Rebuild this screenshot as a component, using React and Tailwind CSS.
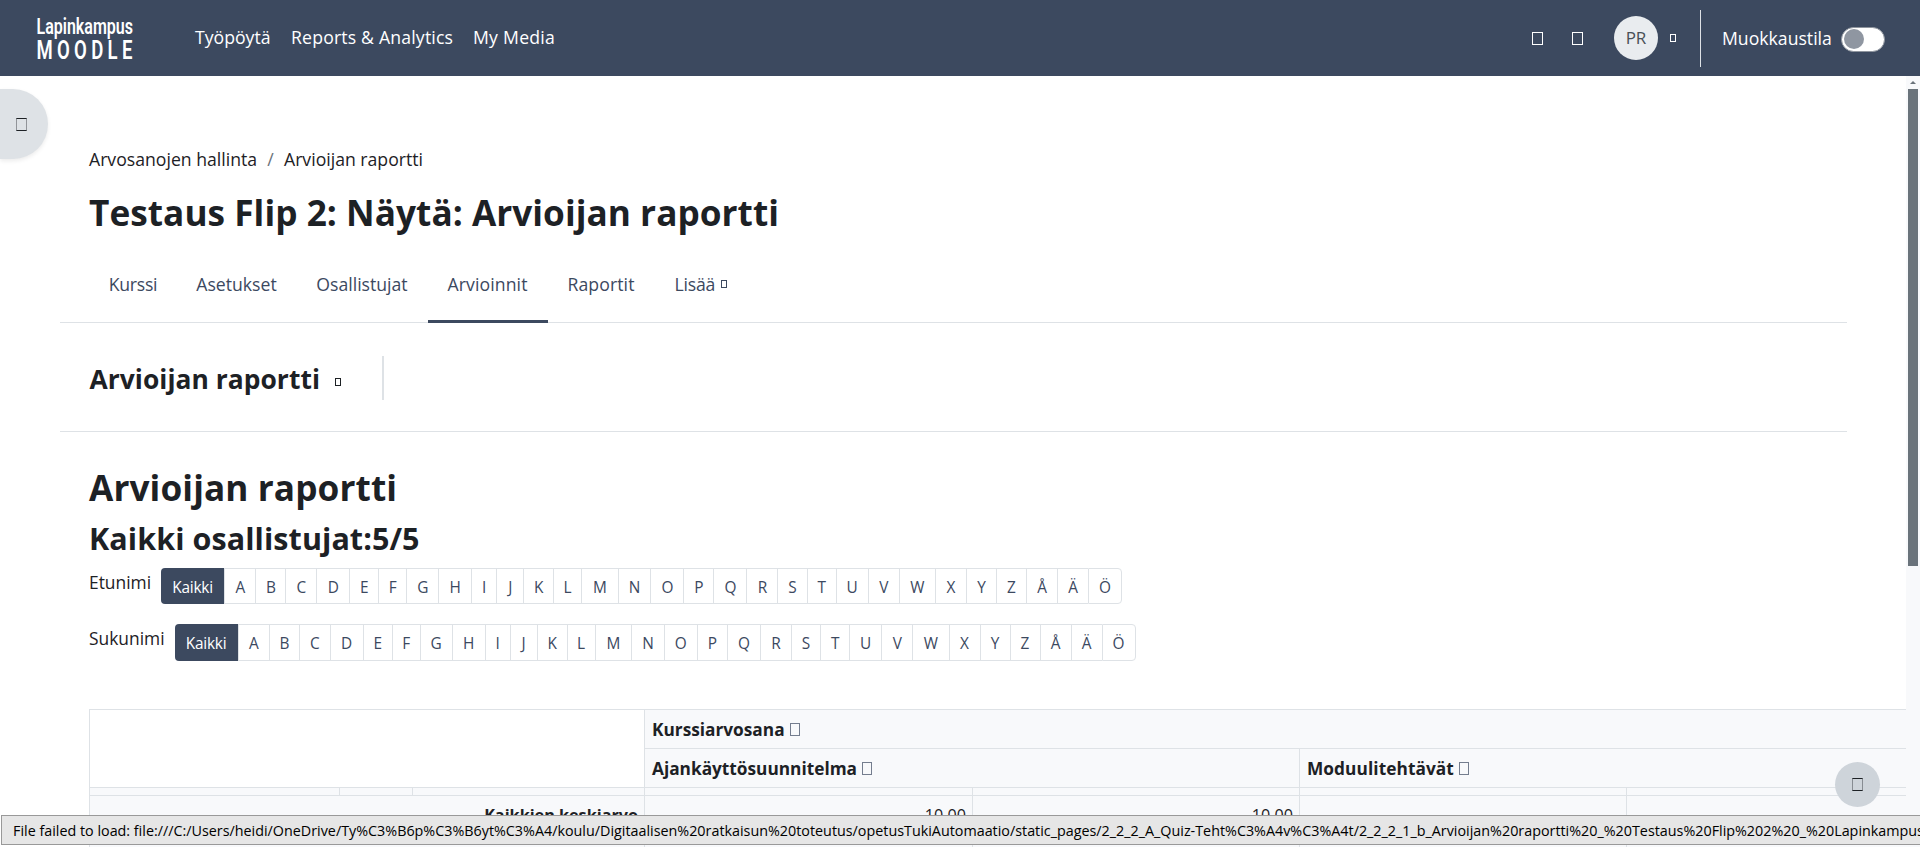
import React from "react";

const LETTERS = [
  ["A", "w-[31.4px]"], ["B", "w-[29.8px]"], ["C", "w-[31px]"], ["D", "w-[32.9px]"], ["E", "w-[29.1px]"],
  ["F", "w-[27.9px]"], ["G", "w-[32.2px]"], ["H", "w-[32.9px]"], ["I", "w-[24.9px]"], ["J", "w-[27.2px]"],
  ["K", "w-[29.8px]"], ["L", "w-[28.1px]"], ["M", "w-[36.4px]"], ["N", "w-[32.9px]"], ["O", "w-[32.8px]"],
  ["P", "w-[30.2px]"], ["Q", "w-[33px]"], ["R", "w-[31px]"], ["S", "w-[29.1px]"], ["T", "w-[29.2px]"],
  ["U", "w-[32px]"], ["V", "w-[31.1px]"], ["W", "w-[36.2px]"], ["X", "w-[31px]"], ["Y", "w-[30px]"],
  ["Z", "w-[30px]"], ["Å", "w-[31px]"], ["Ä", "w-[31px]"], ["Ö", "w-[34.2px]"],
];

const TABS = [
  ["Kurssi", "w-[87px] tracking-[-0.3px]"],
  ["Asetukset", "w-[120px]"],
  ["Osallistujat", "w-[131px]"],
  ["Arvioinnit", "w-[120px] tracking-[0.1px]", true],
  ["Raportit", "w-[107px] tracking-[0.1px]"],
];

function Glyph({ className }) {
  return <span className={`inline-block shrink-0 border ${className}`} />;
}

function Initials({ label, className, textOffset }) {
  return (
    <div className="flex items-start">
      <span className="mr-2.5 h-7 text-[17.4px] leading-7">{label}</span>
      <div className={`flex text-[15.4px] text-[#3c495f] ${className}`}>
        <span className={`flex w-[63px] items-center justify-center rounded-l bg-[#3c495f] tracking-[-0.2px] text-white ${textOffset}`}>
          Kaikki
        </span>
        {LETTERS.map(([letter, width]) => (
          <span
            key={letter}
            className={`flex items-center justify-center border-y border-l border-[#dee2e6] last:rounded-r last:border-r ${textOffset} ${width}`}
          >
            {letter}
          </span>
        ))}
      </div>
    </div>
  );
}

const TH = "border-t border-l border-[#dee2e6] bg-[#f8f9fb] px-[7px] pt-px pb-0 text-left font-bold whitespace-nowrap";
const TD = "border-t border-l border-[#dee2e6] bg-[#f8f9fb] px-1.5 py-0 text-right align-top whitespace-nowrap";

function Navbar() {
  return (
    <header className="flex h-[76px] shrink-0 items-center bg-[#3c495f] text-[17.65px] text-white">
      <svg className="ml-[36px] h-[50px] w-[100px]" viewBox="0 0 100 50" fill="#fff" fontFamily="Roboto, sans-serif" fontWeight="600">
        <text transform="translate(0.5 21) scale(0.76 1)" fontSize="22" textLength="127" lengthAdjust="spacingAndGlyphs">Lapinkampus</text>
        <text transform="translate(0.5 45.5) scale(0.7 1)" fontSize="26.5" textLength="137" lengthAdjust="spacing">MOODLE</text>
      </svg>
      <nav className="ml-[59px] flex gap-5 pb-[2px]">
        <span className="w-[76px] whitespace-nowrap">Työpöytä</span>
        <span className="w-[162px] tracking-[0.18px] whitespace-nowrap">Reports &amp; Analytics</span>
        <span className="tracking-[0.25px] whitespace-nowrap">My Media</span>
      </nav>
      <div className="ml-auto flex h-full items-center pr-[35px]">
        <Glyph className="h-[13px] w-[11px]" />
        <Glyph className="ml-[29px] h-[13px] w-[11px]" />
        <span className="ml-[31px] flex size-11 items-center justify-center rounded-full bg-[#e9ecef] text-[17px] text-[#495057]">PR</span>
        <Glyph className="ml-3 h-2 w-[6px]" />
        <span className="mr-[21px] ml-[24px] h-[57px] w-px bg-[#dee2e6]" />
        <span className="w-[110px] whitespace-nowrap">Muokkaustila</span>
        <span className="mt-[2px] ml-[9px] flex h-[25px] w-11 items-center rounded-full border border-[#8f959e] bg-white px-[2px]">
          <span className="size-5 rounded-full bg-[#8f96a1]" />
        </span>
      </div>
    </header>
  );
}

function GradeTable() {
  return (
    <table className="mt-12 w-[1864px] table-fixed border-separate border-spacing-0 text-[17.25px] leading-[37px]">
      <colgroup>
        <col className="w-[250px]" />
        <col className="w-[73px]" />
        <col className="w-[232px]" />
        <col className="w-[328px]" />
        <col className="w-[327px]" />
        <col className="w-[327px]" />
        <col className="w-[327px]" />
      </colgroup>
      <tbody>
        <tr className="h-[39px]">
          <td colSpan={3} rowSpan={2} className="border-t border-l border-[#dee2e6]" />
          <th colSpan={4} className={TH}>
            Kurssiarvosana
            <Glyph className="ml-[5px] h-[13px] w-[10px] border-[#3c495f]/70" />
          </th>
        </tr>
        <tr className="h-[39px]">
          <th colSpan={2} className={TH}>
            Ajankäyttösuunnitelma
            <Glyph className="ml-[5px] h-[13px] w-[10px] border-[#3c495f]/70" />
          </th>
          <th colSpan={2} className={TH}>
            <span className="tracking-[0.08px]">Moduulitehtävät</span>
            <Glyph className="ml-[5px] h-[13px] w-[10px] border-[#3c495f]/70" />
          </th>
        </tr>
        <tr className="h-2 leading-none">
          <td className={TD} />
          <td className={TD} />
          <td className={TD} />
          <td className={TD} />
          <td className={TD} />
          <td className={TD} />
          <td className={TD} />
        </tr>
        <tr className="h-[60px] leading-[38px]">
          <td colSpan={3} className={`${TD} text-[16.2px] font-bold`}>Kaikkien keskiarvo</td>
          <td className={`${TD} text-[16.2px]`}>10.00</td>
          <td className={`${TD} text-[16.2px]`}>10.00</td>
          <td className={TD} />
          <td className={TD} />
        </tr>
      </tbody>
    </table>
  );
}

export default function App() {
  return (
    <div className="relative flex h-[847px] w-[1920px] flex-col overflow-hidden bg-white font-['Open_Sans',sans-serif] text-[17.65px] text-[#1d2125]">
      <Navbar />
      <div className="flex min-h-0 flex-1">
        <main className="w-[1906px] overflow-hidden">
          <div className="mt-[69px] flex h-7 items-center pl-[89px] whitespace-nowrap">
            <span className="w-[168px]">Arvosanojen hallinta</span>
            <span className="w-[27px] text-center text-[#6a737b]">/</span>
            <span>Arvioijan raportti</span>
          </div>
          <h1 className="mt-[15px] h-12 pl-[89px] text-[35.2px] leading-[48px] font-bold tracking-[0.04px] whitespace-nowrap">
            Testaus Flip 2: Näytä: Arvioijan raportti
          </h1>
          <nav className="mt-2.5 ml-[60px] flex h-[77px] w-[1787px] border-b border-[#dee2e6] pl-[29.5px] text-[#3c495f]">
            {TABS.map(([name, look, active]) => (
              <span
                key={name}
                className={`flex h-[77px] items-center justify-center border-b-[3px] pt-[2px] whitespace-nowrap ${active ? "border-[#3c495f]" : "border-transparent"} ${look}`}
              >
                {name}
              </span>
            ))}
            <span className="flex h-[77px] items-center border-b-[3px] border-transparent pt-[2px] pl-5 tracking-[-0.2px]">
              Lisää
              <Glyph className="ml-[6px] h-2 w-[6px]" />
            </span>
          </nav>
          <div className="ml-[60px] flex h-[109px] w-[1787px] items-center border-b border-[#dee2e6] pt-[2px] pl-[29.5px]">
            <span className="w-[245.5px] pt-[3px] text-[26.4px] font-bold tracking-[0.04px] whitespace-nowrap">Arvioijan raportti</span>
            <Glyph className="mt-[7px] h-2 w-[6px]" />
            <span className="ml-[41px] h-11 w-[2px] bg-[#dee2e6]" />
          </div>
          <div className="pl-[89px]">
            <h2 className="mt-[33px] h-11 text-[35.2px] leading-[44px] font-bold tracking-[0.1px]">Arvioijan raportti</h2>
            <h3 className="mt-[9px] mb-2.5 h-10 text-[30.5px] leading-10 font-bold tracking-[0.07px]">Kaikki osallistujat:5/5</h3>
            <Initials label="Etunimi" className="h-9" textOffset="pt-[3px]" />
            <div className="h-5" />
            <Initials label="Sukunimi" className="h-[37px]" textOffset="pt-[2px]" />
            <GradeTable />
          </div>
        </main>
        <aside className="flex w-[14px] flex-col items-center bg-[#f8f9fb]">
          <svg className="mt-1 h-[5px] w-[6px]" viewBox="0 0 6 5" fill="#6a737b">
            <path d="M3 1 6 4H0Z" />
          </svg>
          <span className="mt-1 h-[477px] w-[10px] bg-[#6a737b]" />
        </aside>
      </div>

      <button className="absolute top-[89px] left-0 flex h-[70px] w-12 items-center rounded-r-[35px] bg-[#dee2e6] pl-4 shadow-[0_2px_4px_rgba(0,0,0,0.08)]">
        <Glyph className="h-[13px] w-[11px] border-x-[#1d2125]/40 border-y-[#1d2125]" />
      </button>
      <button className="absolute top-[762px] left-[1835px] flex size-[45px] items-center justify-center rounded-full bg-[#ced4da]">
        <Glyph className="h-[13px] w-[11px] border-x-[#1d2125]/40 border-y-[#1d2125]" />
      </button>
      <div className="absolute top-[815px] left-px h-[30px] w-[1940px] border border-[#999] bg-[#e6e6e6] pl-[11px] text-[14.33px] leading-[29px] whitespace-nowrap text-black">
        File failed to load: file:///C:/Users/heidi/OneDrive/Ty%C3%B6p%C3%B6yt%C3%A4/koulu/Digitaalisen%20ratkaisun%20toteutus/opetusTukiAutomaatio/static_pages/2_2_2_A_Quiz-Teht%C3%A4v%C3%A4t/2_2_2_1_b_Arvioijan%20raportti%20_%20Testaus%20Flip%202%20_%20Lapinkampus%20Moodle
      </div>
    </div>
  );
}
